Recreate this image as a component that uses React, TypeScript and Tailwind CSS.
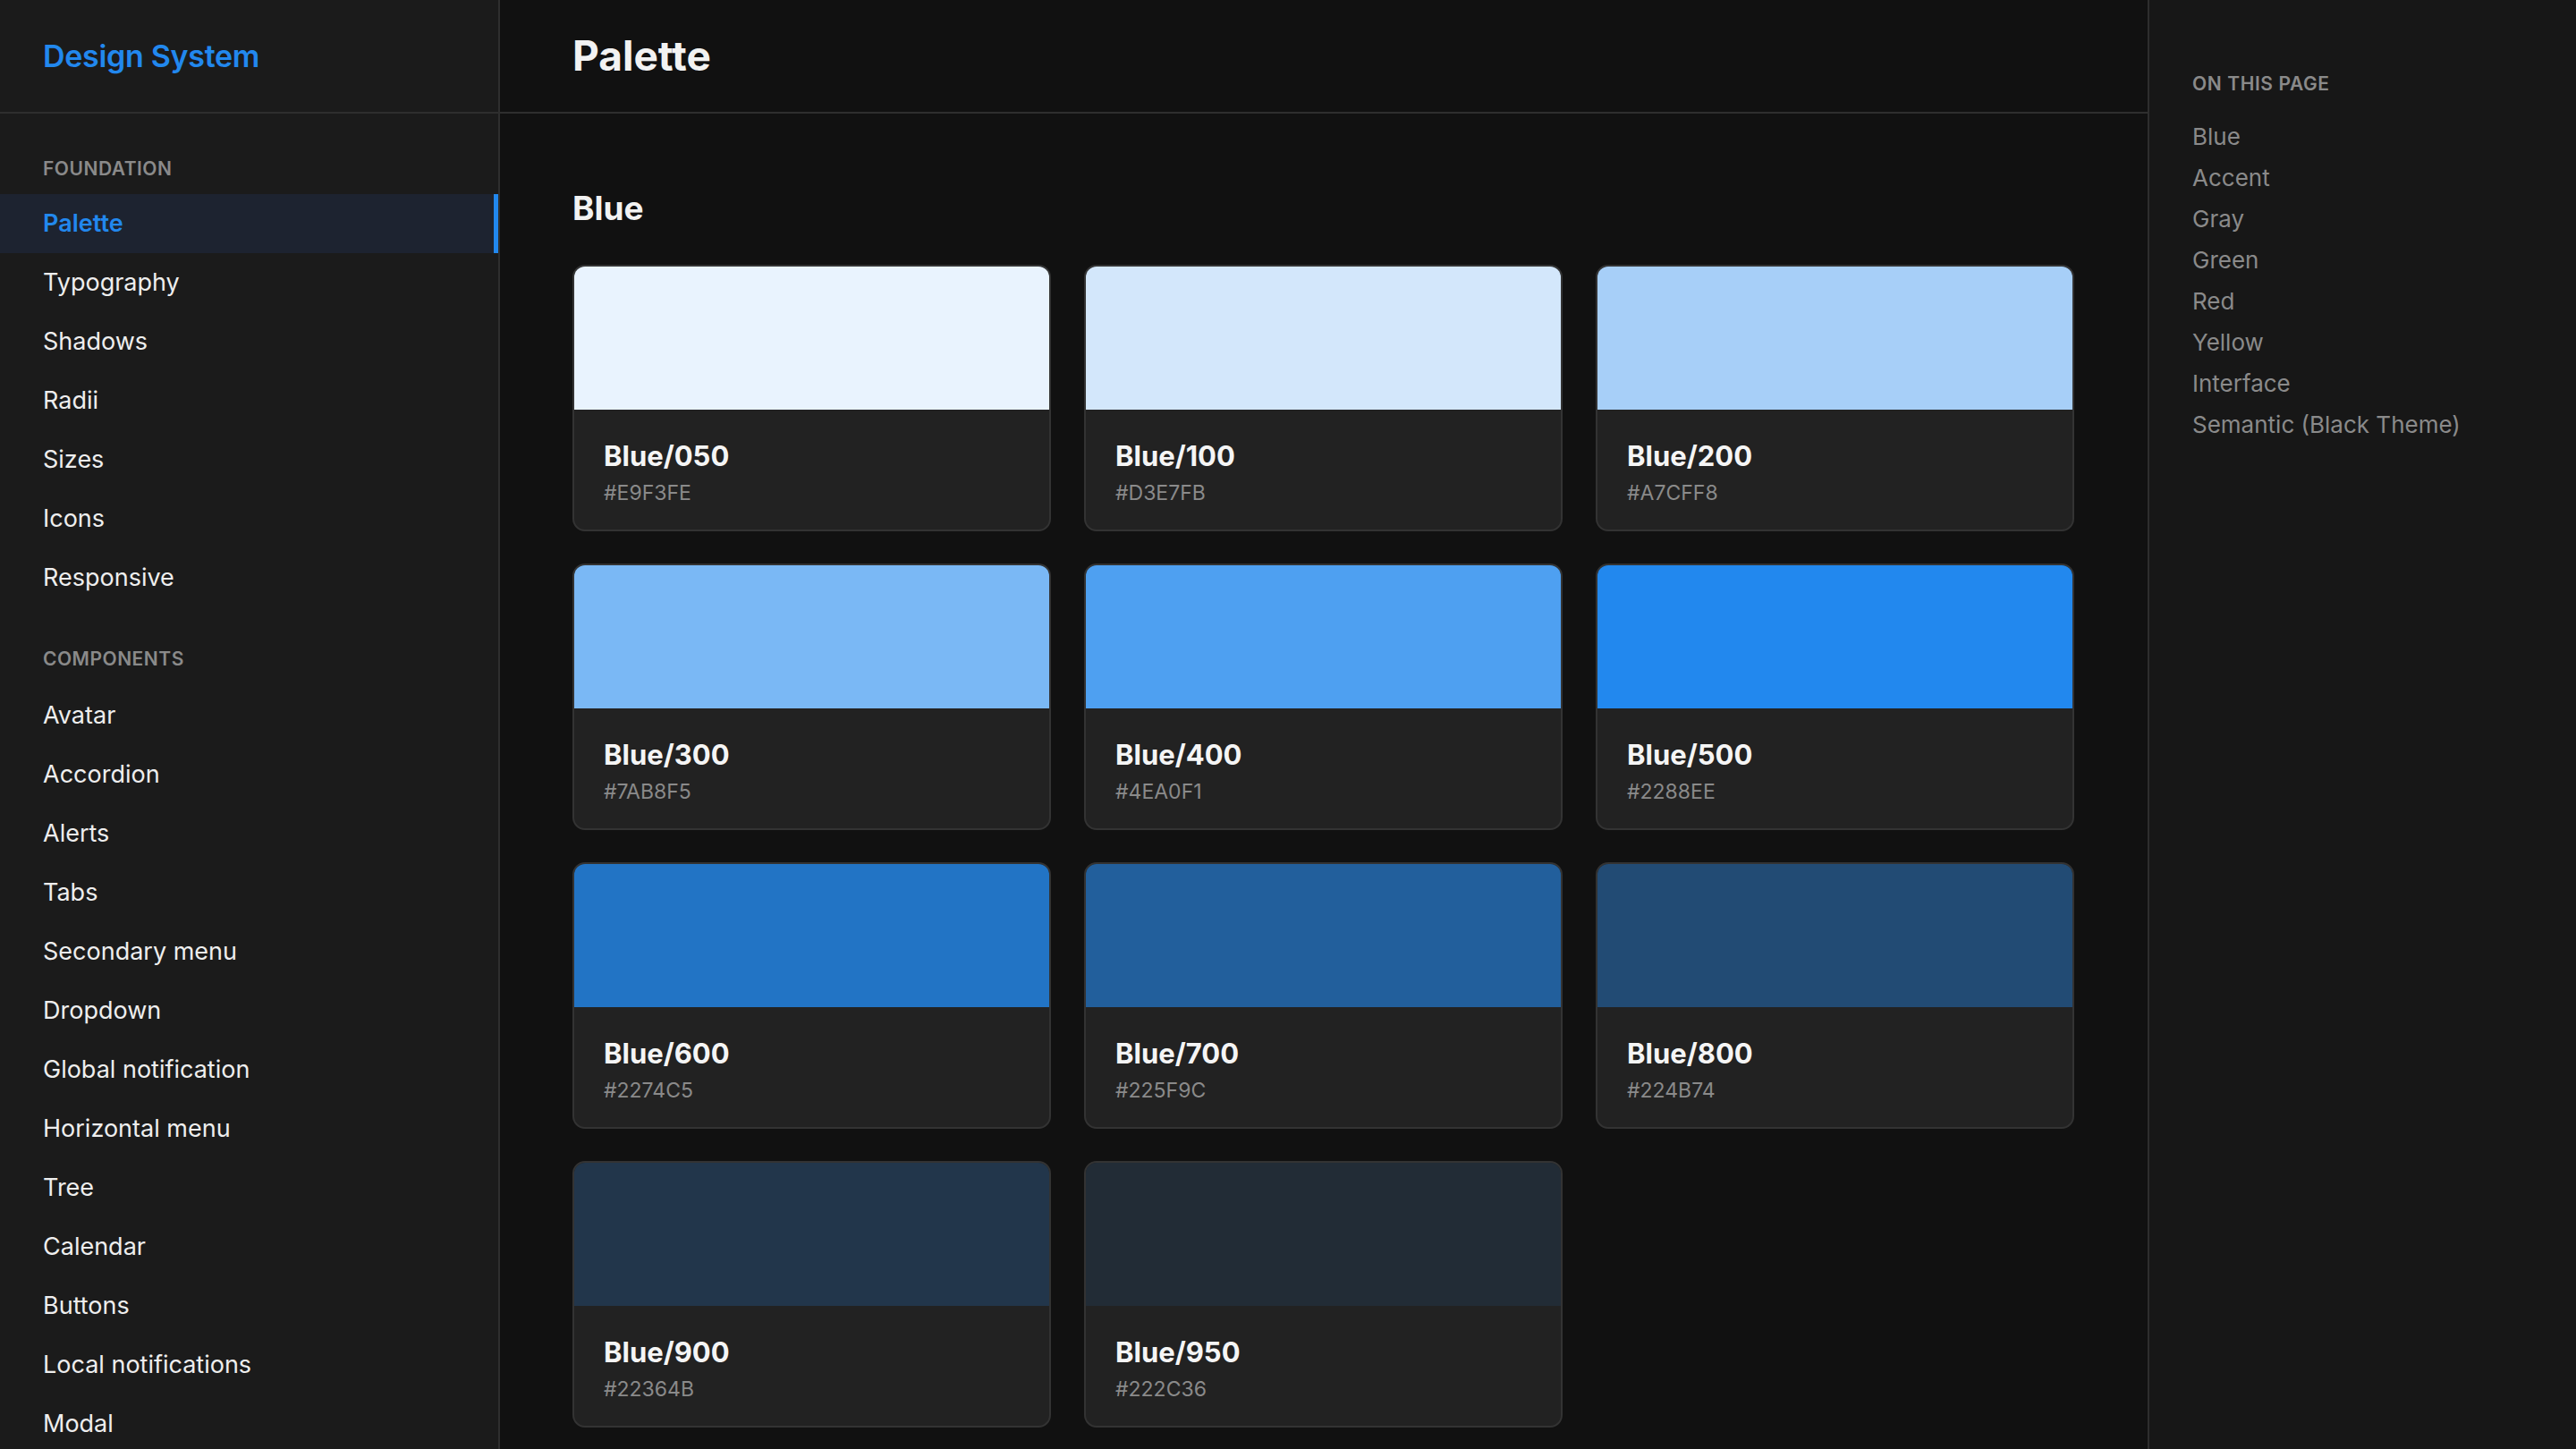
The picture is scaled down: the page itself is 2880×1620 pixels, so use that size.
import React from "react";

const foundation = ["Palette","Typography","Shadows","Radii","Sizes","Icons","Responsive"];
const components = ["Avatar","Accordion","Alerts","Tabs","Secondary menu","Dropdown","Global notification","Horizontal menu","Tree","Calendar","Buttons","Local notifications","Modal"];
const toc = ["Blue","Accent","Gray","Green","Red","Yellow","Interface","Semantic (Black Theme)"];
const swatches = [
  ["050","#E9F3FE"],["100","#D3E7FB"],["200","#A7CFF8"],["300","#7AB8F5"],["400","#4EA0F1"],["500","#2288EE"],
  ["600","#2274C5"],["700","#225F9C"],["800","#224B74"],["900","#22364B"],["950","#222C36"],
];

export default function App() {
  return (
    <div className="flex h-[1620px] w-[2880px] overflow-hidden bg-[#111111] text-white" style={{fontFamily: "Inter, 'Noto Sans', sans-serif"}}>
      <aside className="w-[559px] shrink-0 border-r-2 border-[#2e2e2e] bg-[#1b1b1b] flex flex-col">
        <div className="h-[127px] shrink-0 border-b-2 border-[#2e2e2e] flex items-center px-[48px]">
          <span className="text-[34px] font-semibold text-[#2288EE] tracking-[-0.3px]">Design System</span>
        </div>
        <div className="pt-[42px]">
          <div className="px-[48px] text-[21px] font-semibold text-[#8a8a8a] tracking-[0.5px] h-[40px] flex items-center">FOUNDATION</div>
          <div className="mt-[8px]">
            {foundation.map((f, i) => (
              <div key={f} className={`h-[66px] flex items-center px-[48px] text-[27px] ${i === 0 ? "bg-[#1d2330] text-[#2288EE] font-semibold border-r-[5px] border-[#2288EE]" : "text-[#eeeeee]"}`}>{f}</div>
            ))}
          </div>
          <div className="px-[48px] mt-[38px] text-[21px] font-semibold text-[#8a8a8a] tracking-[0.5px] h-[40px] flex items-center">COMPONENTS</div>
          <div className="mt-[10px]">
            {components.map(f => (
              <div key={f} className="h-[66px] flex items-center px-[48px] text-[27px] text-[#eeeeee]">{f}</div>
            ))}
          </div>
        </div>
      </aside>
      <main className="w-[1842px] shrink-0 flex flex-col">
        <div className="h-[127px] shrink-0 border-b-2 border-[#2e2e2e] flex items-center px-[81px]">
          <h1 className="text-[46px] font-bold text-[#f2f2f2]">Palette</h1>
        </div>
        <div className="px-[81px] pt-[80px]">
          <h2 className="text-[37px] font-bold text-[#f2f2f2] leading-[52px]">Blue</h2>
          <div className="mt-[37px] grid grid-cols-[535px_535px_535px] gap-[36px_37px]">
            {swatches.map(([n, hex]) => (
              <div key={n} className="h-[298px] rounded-[14px] border-2 border-[#333333] bg-[#222222] overflow-hidden flex flex-col">
                <div className="h-[160px]" style={{ background: hex }} />
                <div className="px-[33px] pt-[32px]">
                  <div className="text-[31px] font-bold text-[#f5f5f5] leading-[40px]">Blue/{n}</div>
                  <div className="text-[23px] text-[#8a8a8a] mt-[4px]">{hex}</div>
                </div>
              </div>
            ))}
          </div>
        </div>
      </main>
      <aside className="flex-1 border-l-2 border-[#2e2e2e] bg-[#171717] px-[48px] pt-[78px]">
        <div className="text-[21px] font-semibold text-[#8a8a8a] tracking-[0.6px]">ON THIS PAGE</div>
        <div className="mt-[20px] flex flex-col">
          {toc.map(t => (
            <div key={t} className="h-[46px] flex items-center text-[26px] text-[#8a8a8a]">{t}</div>
          ))}
        </div>
      </aside>
    </div>
  );
}
